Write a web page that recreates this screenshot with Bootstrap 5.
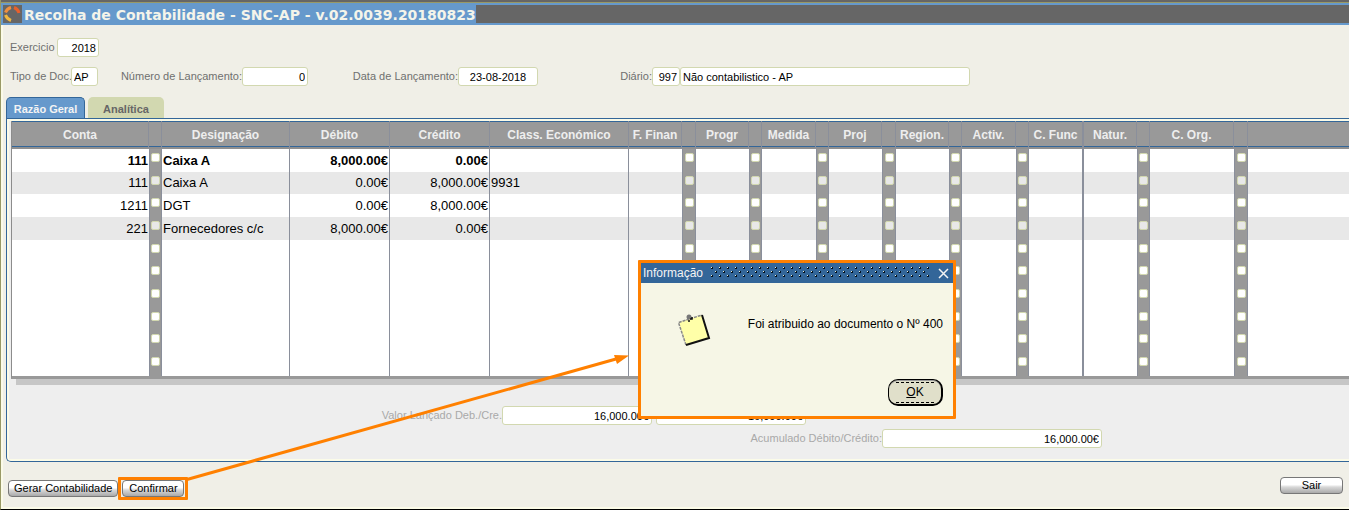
<!DOCTYPE html>
<html lang="pt">
<head>
<meta charset="utf-8">
<meta name="viewport" content="width=device-width, initial-scale=1">
<title>Recolha de Contabilidade</title>
<link href="https://cdn.jsdelivr.net/npm/bootstrap@5.3.0/dist/css/bootstrap.min.css" rel="stylesheet">
<style>
  :root { --line: #336699; --sky: #6699cc; --sage: #d2d8b0; --ivory: #fbfbe8; --steel: #999999; --mark: #ff8000; }
  body { font-family: "Liberation Sans", Arial, sans-serif; font-size: 11px; line-height: 15px; color: #000; background: #f0efe7; }
  .app { border-left: 1px solid #999966; border-bottom: 1px solid #000; box-shadow: inset 2px 0 var(--ivory), inset 0 -2px var(--ivory); }
  .topstrip { height: 3px; margin-left: -1px; background: #666; border-bottom: 1px solid #999966; }
  .titlebar { height: 22px; padding: 2px 0 2px 2px; background: var(--sky); }
  .titlebar .rest { background: #666; }
  .titlebar h1 { margin: 0; padding: 0 0 0 2px; font: bold 14px/20px "DejaVu Sans", Verdana, sans-serif; color: #f4f4ea; white-space: nowrap; }
  .logo { width: 19px; height: 18px; background: #666; flex: none; }
  .form-area { padding: 13px 10px 0; }
  .form-area .line { margin-bottom: 10px; margin-left: -1px; }
  .fld-label { color: #6f6f6f; text-align: right; white-space: nowrap; flex: none; }
  .dim .fld-label { color: #a9a9a9; }
  .fld { height: 19px; padding: 1px 2px 0; border: 1px solid var(--sage); border-radius: 3px; background: #fff; color: #000; font-size: 11px; line-height: 15px; flex: none; }
  .w27 { width: 27px; } .w28 { width: 28px; } .w42 { width: 42px; } .w47 { width: 47px; } .w61 { width: 61px; }
  .w66 { width: 66px; } .w80 { width: 80px; } .w114 { width: 114px; } .w144 { width: 144px; } .w150 { width: 150px; }
  .w220 { width: 220px; } .w290 { width: 290px; }
  .pages { margin: 1px 0 0 5px; padding-top: 1px; gap: 3px; }
  .pages .nav-link { height: 21px; padding: 3px 0 0; text-align: center; font-size: 11px; line-height: 19px; font-weight: bold; border: 0; border-radius: 5px 5px 0 0; }
  .pages .p1 { width: 79px; color: #f4f4f4; background: var(--sky); border: 1px solid var(--line); border-bottom: 0; padding-top: 2px; }
  .pages .p2 { width: 76px; color: #666; background: var(--sage); }
  .panel { margin-left: 5px; border: 1px solid var(--line); border-right: 0; border-bottom-left-radius: 5px; padding: 2px 0 2px 2px; background: var(--ivory); }
  .panel-in { background: #eee; padding: 0 0 11px 2px; }
  .ledger-wrap { border-bottom: 3px solid #999; border-left: 1px solid #8c8c8c; }
  .ledger-shade { height: 6px; margin-left: 5px; background: #c6c6c6; }
  .ledger { width: 100%; table-layout: fixed; border-collapse: separate; border-spacing: 0; background: #fff; font-size: 13px; line-height: 20px; }
  .ledger th, .ledger td { padding: 0; white-space: nowrap; overflow: hidden; }
  .ledger th { height: 28px; padding-bottom: 1px; background: var(--steel); color: #eee; font-size: 12px; line-height: 22px; text-align: center; border-right: 1px solid #8a8f9b; box-shadow: inset 0 1px var(--line), inset 0 -2px #8f8f8f, inset 0 -3px #336699; }
  .ledger th:last-child { border-right: 0; }
  .ledger td { height: 23px; padding: 0 1px; border-right: 1px solid #8a8f9b; vertical-align: middle; }
  .ledger td:last-child { border-right: 0; }
  .ledger td.before-sel { border-right: 0; }
  .ledger tr:nth-child(3n+2) td { height: 22px; }
  .ledger tr.alt { background: #e8e8e8; }
  .ledger td.dbl, .ledger th.dbl { border-right-width: 2px; }
  .ledger td.sel { background: var(--steel); padding: 0; vertical-align: top; text-align: center; border-left: 1px solid #8a8f9b; line-height: 0; }
  .sel input { appearance: none; width: 9px; height: 9px; margin: 4px auto 0; display: block; background: #fff; border: 1px solid var(--sage); border-radius: 2px; }
  .alt .sel input { background: #e8e8e8; }
  .totals { padding-top: 21px; }
  .totals .second { margin-top: 4px; }
  .sum-a { width: 491px; } .sum-b { width: 871px; }
  .actions { padding: 15px 6px 9px 7px; }
  .fbtn { height: 17px; padding: 0 5px; border: 1px solid #777; border-radius: 4px; background: linear-gradient(#fff 45%, #d8d8d8 60%, #a9a9a9); color: #000; font-size: 11px; line-height: 15px; }
  .fbtn.wide { width: 63px; }
  .ring { border: 3px solid var(--mark); border-radius: 1px; padding: 0 1px; }
  .ring .fbtn { display: block; width: 62px; }
  .arrow { position: absolute; left: 0; top: 0; pointer-events: none; }
  .notice { position: absolute; left: 637px; top: 260px; width: 318px; height: 159px; border: 3px solid var(--mark); border-radius: 1px; background: #f6f6e6; z-index: 3; }
  .notice-head { height: 20px; background: var(--line); color: #f4f4f4; padding: 0 4px 0 2px; font-size: 12px; }
  .notice-head .dots { width: 220px; height: 12px; }
  .notice-close { border: 0; padding: 0; background: none; line-height: 0; }
  .notice-body { padding: 30px 10px 0 35px; font-size: 12px; }
  .notice-foot { padding: 0 10px 10px; }
  .ok { width: 55px; height: 27px; border: 2px solid #000; border-top-width: 1px; border-left-width: 1px; border-radius: 10px; background: #e0dfca; font-size: 12px; padding: 2px 7px; box-shadow: inset 0 1px #999; }
  .ok span { display: block; border: 1px dashed #000; border-width: 1px 0; line-height: 19px; }
</style>
</head>
<body>
<div class="app position-relative overflow-hidden">
  <div class="topstrip"></div>
  <header class="titlebar d-flex">
    <svg class="logo" viewBox="0 0 19 18" aria-hidden="true">
      <g fill="none" stroke-width="3">
        <path d="M2.500 7.500Q4 3.500 8 2.500" stroke="#ef9040"/>
        <path d="M11 2.500Q15 4 16 8" stroke="#e8602c"/>
        <path d="M2.500 10Q4 14 8 15.500" stroke="#f0b840"/>
      </g>
    </svg>
    <h1>Recolha de Contabilidade - SNC-AP - v.02.0039.20180823</h1>
    <div class="rest flex-grow-1"></div>
  </header>

  <form class="form-area">
    <div class="line d-flex align-items-center">
      <label class="fld-label w47 text-start" for="ano">Exercicio</label>
      <input class="fld w42 text-end" id="ano" value="2018">
    </div>
    <div class="line d-flex align-items-center">
      <label class="fld-label w61 text-start" for="tipo">Tipo de Doc.</label>
      <input class="fld w27" id="tipo" value="AP">
      <label class="fld-label w144" for="num">Número de Lançamento:</label>
      <input class="fld w66 text-end" id="num" value="0">
      <label class="fld-label w150" for="data">Data de Lançamento:</label>
      <input class="fld w80 text-center" id="data" value="23-08-2018">
      <label class="fld-label w114" for="diario">Diário:</label>
      <input class="fld w28 text-end" id="diario" value="997">
      <input class="fld w290" aria-label="Descrição do diário" value="Não contabilistico - AP">
    </div>
  </form>

  <nav class="pages nav">
    <a class="nav-link p1" href="#geral">Razão Geral</a>
    <a class="nav-link p2" href="#analitica">Analítica</a>
  </nav>

  <main class="panel" id="geral">
    <div class="panel-in">
      <div class="ledger-wrap">
        <table class="ledger">
          <colgroup id="cols"></colgroup>
          <thead><tr id="heads"></tr></thead>
          <tbody id="rows"></tbody>
        </table>
      </div>
      <div class="ledger-shade"></div>
      <div class="totals dim">
        <div class="d-flex align-items-center">
          <label class="fld-label sum-a" for="deb">Valor Lançado Deb./Cre.</label>
          <input class="fld w150 text-end" id="deb" value="16,000.00€">
          <input class="fld w150 text-end ms-1" aria-label="Valor lançado a crédito" value="16,000.00€">
        </div>
        <div class="second d-flex align-items-center">
          <label class="fld-label sum-b" for="acum">Acumulado Débito/Crédito:</label>
          <input class="fld w220 text-end" id="acum" value="16,000.00€">
        </div>
      </div>
    </div>
  </main>

  <footer class="actions d-flex align-items-start">
    <div class="d-flex align-items-center">
      <button class="fbtn" type="button">Gerar Contabilidade</button>
      <span class="ring"><button class="fbtn" type="button">Confirmar</button></span>
    </div>
    <button class="fbtn wide ms-auto" type="button">Sair</button>
  </footer>

  <svg class="arrow" width="640" height="500" aria-hidden="true">
    <path d="M186 479.500L615 359" stroke="#ff8000" stroke-width="3"/>
    <path d="M628 355.500L613 355L616 364Z" fill="#ff8000"/>
  </svg>

  <section class="notice d-flex flex-column" role="dialog" aria-label="Informação">
    <div class="notice-head d-flex align-items-center justify-content-between">
      <span>Informação</span>
      <svg class="dots" aria-hidden="true">
        <defs><pattern id="dotgrid" width="8" height="8" patternUnits="userSpaceOnUse">
          <path d="M0 0h1v1h-1zM4 4h1v1h-1z" fill="#e8eed8"/>
          <path d="M1 0h1v2h-2v-1h1zM5 4h1v2h-2v-1h1z" fill="#001020"/>
        </pattern></defs>
        <rect width="220" height="12" fill="url(#dotgrid)"/>
      </svg>
      <button class="notice-close" type="button" aria-label="Fechar">
        <svg width="11" height="11"><path d="M1 1L10 10M10 1L1 10" stroke="#f4f4f4" stroke-width="1.500"/></svg>
      </button>
    </div>
    <div class="notice-body d-flex justify-content-between">
      <svg width="35" height="35" viewBox="0 0 35 35" aria-hidden="true">
        <path d="M3 9L26 2L33 25L10 32Z" fill="#ffffa8"/>
        <path d="M10 32L2.500 9.500L26 2" fill="none" stroke="#888" stroke-width="1.500" stroke-dasharray="3 1"/>
        <path d="M26 2L33 25L10 32" fill="none" stroke="#111" stroke-width="2"/>
        <circle cx="13" cy="4" r="2.500" fill="#777"/>
        <path d="M14 6h2v-2M13 7v2" stroke="#111" stroke-width="1.500" fill="none"/>
      </svg>
      <span class="pt-1">Foi atribuido ao documento o Nº 400</span>
    </div>
    <div class="notice-foot mt-auto text-end"><button class="ok" type="button"><span><u>O</u>K</span></button></div>
  </section>
</div>

<script src="https://cdn.jsdelivr.net/npm/bootstrap@5.3.0/dist/js/bootstrap.bundle.min.js"></script>
<script>
  // [heading, width, kind]; kind "s" is a selector strip, "r" right-aligned, "d" double rule
  const columns = [
    ["Conta", 137, "r"], ["", 13, "s"], ["Designação", 128], ["Débito", 100, "r"], ["Crédito", 100, "r"],
    ["Class. Económico", 139], ["F. Finan", 53], ["", 14, "s"], ["Progr", 53], ["", 13, "s"],
    ["Medida", 54], ["", 13, "s"], ["Proj", 53], ["", 14, "s"], ["Region.", 53], ["", 13, "s"],
    ["Activ.", 54], ["", 13, "s"], ["C. Func", 55, "d"], ["Natur.", 53], ["", 13, "s"],
    ["C. Org.", 84], ["", 14, "s"], ["", 0]
  ];
  const entries = [
    { 0: "111", 2: "Caixa A", 3: "8,000.00€", 4: "0.00€" },
    { 0: "111", 2: "Caixa A", 3: "0.00€", 4: "8,000.00€", 5: "9931" },
    { 0: "1211", 2: "DGT", 3: "0.00€", 4: "8,000.00€" },
    { 0: "221", 2: "Fornecedores c/c", 3: "8,000.00€", 4: "0.00€" }
  ];
  cols.innerHTML = columns.map(c => c[1] ? `<col style="width:${c[1]}px">` : "<col>").join("");
  heads.innerHTML = columns.map(c => `<th class="${c[2] === "d" ? "dbl" : ""}">${c[0]}</th>`).join("");
  let html = "";
  for (let i = 0; i < 10; i++) {
    const e = entries[i] || {};
    html += `<tr class="${i < 4 && i % 2 ? "alt" : ""} ${i ? "" : "fw-bold"}">` + columns.map((c, k) => {
      if (c[2] === "s") return `<td class="sel"><input type="checkbox" aria-label="Selecionar linha ${i + 1}"></td>`;
      const cls = (c[2] === "r" ? "text-end " : "") + (c[2] === "d" ? "dbl " : "") + (columns[k + 1] && columns[k + 1][2] === "s" ? "before-sel" : "");
      return `<td class="${cls}">${e[k] || ""}</td>`;
    }).join("") + "</tr>";
  }
  rows.innerHTML = html;
</script>
</body>
</html>
